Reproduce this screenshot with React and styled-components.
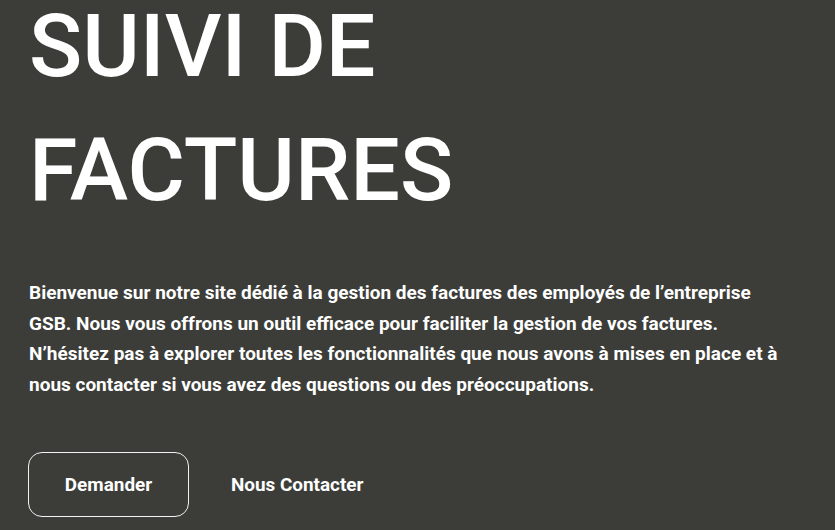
import React from "react";
import styled, { createGlobalStyle } from "styled-components";

const Global = createGlobalStyle`
  html, body { margin: 0; padding: 0; background: #3c3d38; }
  body { font-family: Roboto, "Noto Sans", sans-serif; color: #ffffff; }
`;

const Hero = styled.section`
  width: 835px;
  height: 530px;
  box-sizing: border-box;
  padding: 0 0 0 28px;
  background: #3c3d38;
  overflow: hidden;
  display: flex;
  flex-direction: column;
`;

const Title = styled.h1`
  margin: -16px 0 0 1px;
  font-family: Roboto, sans-serif;
  font-weight: 500;
  font-size: 88px;
  line-height: 124px;
  letter-spacing: 0;
  color: #ffffff;
`;

const Intro = styled.p`
  margin: 46px 0 0 1px;
  max-width: 764px;
  font-family: Roboto, sans-serif;
  font-weight: 700;
  font-size: 19px;
  line-height: 30.5px;
  color: #ffffff;
`;

const Actions = styled.div`
  display: flex;
  align-items: center;
  gap: 42px;
  margin-top: 52px;
`;

const Button = styled.a`
  display: inline-flex;
  align-items: center;
  justify-content: center;
  box-sizing: border-box;
  width: ${(p) => (p.$outlined ? "161px" : "auto")};
  height: 65px;
  border: ${(p) => (p.$outlined ? "1px solid #f2f2f2" : "none")};
  border-radius: 14px;
  font-family: Roboto, sans-serif;
  font-weight: 700;
  font-size: 18.9px;
  color: #ffffff;
  text-decoration: none;
`;

export default function App() {
  return (
    <>
      <Global />
      <Hero>
        <Title>
          SUIVI DE
          <br />
          FACTURES
        </Title>
        <Intro>
          Bienvenue sur notre site dédié à la gestion des factures des employés de l’entreprise GSB. Nous vous offrons un outil efficace pour faciliter la gestion de vos factures. N’hésitez pas à explorer toutes les fonctionnalités que nous avons à mises en place et à nous contacter si vous avez des questions ou des préoccupations.
        </Intro>
        <Actions>
          <Button $outlined href="#">Demander</Button>
          <Button href="#">Nous Contacter</Button>
        </Actions>
      </Hero>
    </>
  );
}
